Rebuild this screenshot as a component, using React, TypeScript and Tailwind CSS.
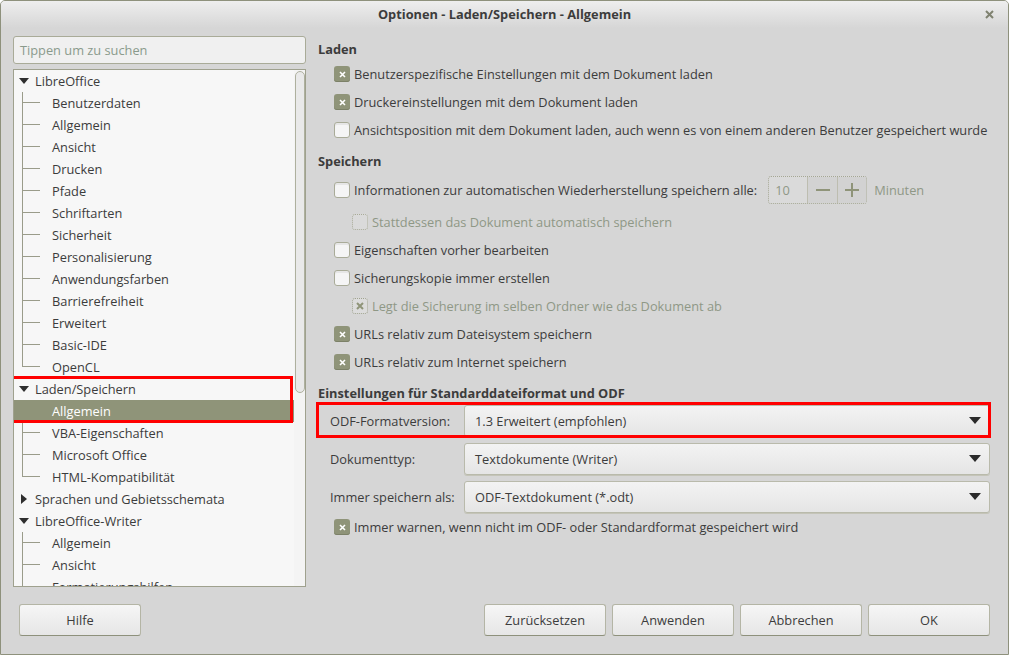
import React from "react";

type CbState = "on" | "off" | "dis-on" | "dis-off";

function Check({ state }: { state: CbState }) {
  if (state === "on") {
    return (
      <div className="w-[16px] h-[16px] rounded-[3px] bg-[#8f9479] flex items-center justify-center shrink-0 shadow-[inset_0_-1px_0_#7c8168]">
        <svg width="7" height="7" viewBox="0 0 7 7">
          <path d="M1 1L6 6M6 1L1 6" stroke="#ffffff" strokeWidth="1.6" />
        </svg>
      </div>
    );
  }
  if (state === "off") {
    return (
      <div className="w-[16px] h-[16px] rounded-[3px] bg-[#f5f5f5] border border-[#a9ab98] shrink-0 shadow-[inset_0_2px_0_#e6e6e6]" />
    );
  }
  if (state === "dis-on") {
    return (
      <div className="w-[16px] h-[16px] rounded-[3px] bg-[#dcdcdc] border border-dotted border-[#9fa28e] flex items-center justify-center shrink-0">
        <svg width="8" height="8" viewBox="0 0 8 8">
          <path d="M1 1L7 7M7 1L1 7" stroke="#8f9479" strokeWidth="2" />
        </svg>
      </div>
    );
  }
  return (
    <div className="w-[16px] h-[16px] rounded-[3px] bg-[#dadada] border border-dotted border-[#a9ab98] shrink-0" />
  );
}

function CheckRow({
  state,
  label,
  indent,
  children,
}: {
  state: CbState;
  label: string;
  indent?: boolean;
  children?: React.ReactNode;
}) {
  const disabled = state === "dis-on" || state === "dis-off";
  return (
    <div className={indent ? "h-[28px] shrink-0 flex items-center pl-[34px]" : "h-[28px] shrink-0 flex items-center pl-[16px]"}>
      <Check state={state} />
      <span className={disabled ? "ml-[4px] text-[#8f9886] whitespace-nowrap" : "ml-[4px] whitespace-nowrap"}>{label}</span>
      {children}
    </div>
  );
}

function Heading({ children, className }: { children: React.ReactNode; className?: string }) {
  return <div className={"h-[22px] shrink-0 flex items-center font-bold " + (className ?? "")}>{children}</div>;
}

function Combo({ label, value, highlight }: { label: string; value: string; highlight?: boolean }) {
  return (
    <div className="relative flex items-center h-[32px] shrink-0 pl-[12px]">
      <div className="w-[134px] shrink-0 whitespace-nowrap">{label}</div>
      <div className="flex-1 h-[32px] rounded-[3px] border border-[#b9baab] bg-gradient-to-b from-[#f3f3f3] to-[#e5e5e5] flex items-center pl-[10px] pr-[8px] shadow-[0_1px_0_#c4c4b8]">
        <span className="flex-1 whitespace-nowrap">{value}</span>
        <svg width="12" height="8" viewBox="0 0 12 8">
          <path d="M0 0H12L6 7Z" fill="#2a2a2a" />
        </svg>
      </div>
      {highlight && (
        <div className="absolute left-[-2px] right-[-1px] top-[-3px] bottom-[-1px] border-[3px] border-[#ff0000] pointer-events-none" />
      )}
    </div>
  );
}

type TreeItem = { label: string; kind: "open" | "closed" | "child"; last?: boolean; selected?: boolean };

const tree: TreeItem[] = [
  { label: "LibreOffice", kind: "open" },
  { label: "Benutzerdaten", kind: "child" },
  { label: "Allgemein", kind: "child" },
  { label: "Ansicht", kind: "child" },
  { label: "Drucken", kind: "child" },
  { label: "Pfade", kind: "child" },
  { label: "Schriftarten", kind: "child" },
  { label: "Sicherheit", kind: "child" },
  { label: "Personalisierung", kind: "child" },
  { label: "Anwendungsfarben", kind: "child" },
  { label: "Barrierefreiheit", kind: "child" },
  { label: "Erweitert", kind: "child" },
  { label: "Basic-IDE", kind: "child" },
  { label: "OpenCL", kind: "child", last: true },
  { label: "Laden/Speichern", kind: "open" },
  { label: "Allgemein", kind: "child", selected: true },
  { label: "VBA-Eigenschaften", kind: "child" },
  { label: "Microsoft Office", kind: "child" },
  { label: "HTML-Kompatibilität", kind: "child", last: true },
  { label: "Sprachen und Gebietsschemata", kind: "closed" },
  { label: "LibreOffice-Writer", kind: "open" },
  { label: "Allgemein", kind: "child" },
  { label: "Ansicht", kind: "child" },
  { label: "Formatierungshilfen", kind: "child" },
];

function TreeRow({ item }: { item: TreeItem }) {
  if (item.kind === "child") {
    return (
      <div className={item.selected ? "h-[22px] shrink-0 flex items-center bg-[#8f9479] text-white" : "h-[22px] shrink-0 flex items-center"}>
        <div className="ml-[8px] w-[18px] h-full flex flex-col">
          {item.selected ? (
            <div className="h-full" />
          ) : item.last ? (
            <div className="h-[11px] border-l border-b border-[#9a9c8a]" />
          ) : (
            <div className="h-full border-l border-[#9a9c8a]">
              <div className="h-[11px] border-b border-[#9a9c8a]" />
            </div>
          )}
        </div>
        <span className="ml-[12px] whitespace-nowrap">{item.label}</span>
      </div>
    );
  }
  return (
    <div className="h-[22px] shrink-0 flex items-center pl-[5px]">
      <div className="w-[10px] flex justify-center">
        {item.kind === "open" ? (
          <svg width="10" height="6" viewBox="0 0 10 6">
            <path d="M0 0H10L5 6Z" fill="#2e2e2e" />
          </svg>
        ) : (
          <svg width="6" height="10" viewBox="0 0 6 10">
            <path d="M0 0V10L6 5Z" fill="#2e2e2e" />
          </svg>
        )}
      </div>
      <span className="ml-[6px] whitespace-nowrap">{item.label}</span>
    </div>
  );
}

function Btn({ children, className }: { children: React.ReactNode; className?: string }) {
  return (
    <div
      className={
        "w-[122px] h-[32px] shrink-0 rounded-[3px] border border-[#b4b5a5] border-b-[#8e917c] bg-gradient-to-b from-[#f6f6f6] to-[#e6e6e6] flex items-center justify-center " +
        (className ?? "")
      }
    >
      {children}
    </div>
  );
}

export default function App() {
  return (
    <div className="w-[1009px] h-[655px] flex flex-col bg-[#d6d6d6] border border-[#8e917c] rounded-t-[5px] overflow-hidden text-[#3c3c3c] text-[12.8px] font-['Open_Sans',sans-serif] leading-none">
      {/* title bar */}
      <div className="relative h-[27px] shrink-0 flex items-center justify-center font-bold bg-gradient-to-b from-[#eeeeee] to-[#d6d6d6]">
        <span>Optionen - Laden/Speichern - Allgemein</span>
        <svg className="absolute right-[14px] top-[9px]" width="9" height="9" viewBox="0 0 9 9">
          <path d="M1 1L8 8M8 1L1 8" stroke="#7f8270" strokeWidth="2" />
        </svg>
      </div>

      {/* body */}
      <div className="flex h-[559px] shrink-0 pt-[8px]">
        {/* left */}
        <div className="w-[293px] shrink-0 ml-[12px] flex flex-col">
          <div className="h-[28px] rounded-[3px] border border-[#a9ab98] bg-[#f0f0f0] flex items-center pl-[6px] text-[#8a9a8c] shrink-0">
            Tippen um zu suchen
          </div>
          <div className="mt-[5px] h-[518px] shrink-0 border border-[#9fa18e] bg-[#f7f7f7] flex overflow-hidden">
            <div className="relative flex-1 flex flex-col">
              {tree.map((it, i) => (
                <TreeRow key={i} item={it} />
              ))}
              <div className="absolute left-[-3px] top-[306px] w-[282px] h-[47px] border-[3px] border-[#ff0000] pointer-events-none" />
            </div>
            <div className="w-[11px] shrink-0 bg-[#f4f4f4] flex flex-col items-center">
              <div className="mt-[1px] w-[10px] h-[322px] rounded-full border border-[#aeb09e] bg-[#e9e9e9]" />
            </div>
          </div>
        </div>

        {/* right */}
        <div className="flex-1 min-w-0 ml-[12px] mr-[18px] mt-[2px] flex flex-col">
          <Heading>Laden</Heading>
          <CheckRow state="on" label="Benutzerspezifische Einstellungen mit dem Dokument laden" />
          <CheckRow state="on" label="Druckereinstellungen mit dem Dokument laden" />
          <CheckRow state="off" label="Ansichtsposition mit dem Dokument laden, auch wenn es von einem anderen Benutzer gespeichert wurde" />

          <Heading className="mt-[6px]">Speichern</Heading>
          <div className="mt-[4px]">
            <CheckRow state="off" label="Informationen zur automatischen Wiederherstellung speichern alle:">
              <div className="ml-[11px] h-[28px] w-[99px] shrink-0 flex rounded-[3px] border border-dotted border-[#a5a794] bg-[#dadada]">
                <div className="w-[39px] flex items-center pl-[6px] text-[#8f9886] border-r border-[#bdbdb0]">10</div>
                <div className="w-[30px] flex items-center justify-center border-r border-[#bdbdb0] bg-[#d2d2d2]">
                  <svg width="14" height="2" viewBox="0 0 14 2">
                    <rect width="14" height="2" fill="#8f9479" />
                  </svg>
                </div>
                <div className="flex-1 flex items-center justify-center bg-[#d2d2d2]">
                  <svg width="14" height="14" viewBox="0 0 14 14">
                    <rect y="6" width="14" height="2" fill="#8f9479" />
                    <rect x="6" width="2" height="14" fill="#8f9479" />
                  </svg>
                </div>
              </div>
              <span className="ml-[7px] text-[#8f9886]">Minuten</span>
            </CheckRow>
          </div>
          <div className="mt-[4px]">
            <CheckRow state="dis-off" indent label="Stattdessen das Dokument automatisch speichern" />
          </div>
          <CheckRow state="off" label="Eigenschaften vorher bearbeiten" />
          <CheckRow state="off" label="Sicherungskopie immer erstellen" />
          <CheckRow state="dis-on" indent label="Legt die Sicherung im selben Ordner wie das Dokument ab" />
          <CheckRow state="on" label="URLs relativ zum Dateisystem speichern" />
          <CheckRow state="on" label="URLs relativ zum Internet speichern" />

          <Heading className="mt-[6px]">Einstellungen für Standarddateiformat und ODF</Heading>
          <div className="mt-[1px] flex flex-col gap-[6px]">
            <Combo label="ODF-Formatversion:" value="1.3 Erweitert (empfohlen)" highlight />
            <Combo label="Dokumenttyp:" value="Textdokumente (Writer)" />
            <Combo label="Immer speichern als:" value="ODF-Textdokument (*.odt)" />
          </div>
          <div className="mt-[0px]">
            <CheckRow state="on" label="Immer warnen, wenn nicht im ODF- oder Standardformat gespeichert wird" />
          </div>
        </div>
      </div>

      {/* footer */}
      <div className="flex-1 flex items-start pt-[17px] px-[18px]">
        <Btn>Hilfe</Btn>
        <div className="flex-1" />
        <div className="flex gap-[6px]">
          <Btn>Zurücksetzen</Btn>
          <Btn>Anwenden</Btn>
          <Btn>Abbrechen</Btn>
          <Btn>OK</Btn>
        </div>
      </div>
    </div>
  );
}
